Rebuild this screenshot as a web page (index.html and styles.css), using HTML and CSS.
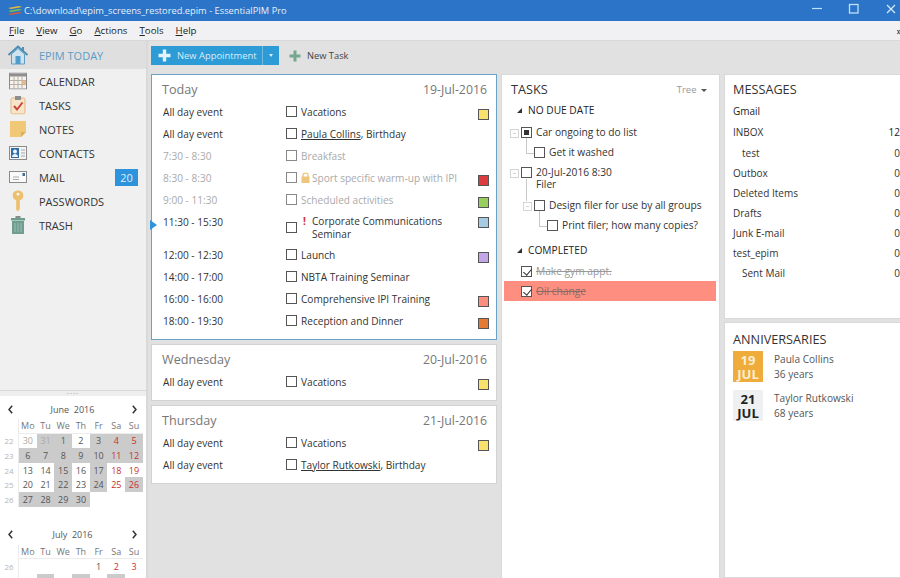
FILE: index.html
```html
<!DOCTYPE html>
<html lang="en">
<head>
    <meta charset="UTF-8">
    <title>EssentialPIM Pro</title>
    <link rel="stylesheet" href="styles.css">
</head>
<body>

    <header class="titlebar">
        <svg class="app-logo" width="16" height="12" viewBox="0 0 16 12">
            <path d="M1 3 L12 1 L15 2 L4 4 Z" fill="#e8b93a"/>
            <path d="M1 6 L12 4 L15 5 L4 7 Z" fill="#7cc24a"/>
            <path d="M1 9 L12 7 L15 8 L4 10 Z" fill="#d9583f"/>
        </svg>
        <span class="title-text">C:\download\epim_screens_restored.epim - EssentialPIM Pro</span>
        <div class="win-controls">
            <svg width="12" height="12" viewBox="0 0 12 12"><path d="M1 5.5 H11" stroke="#bfe0fa" stroke-width="1.2"/></svg>
            <svg width="12" height="12" viewBox="0 0 12 12"><rect x="1.5" y="1.5" width="8.5" height="8.5" fill="none" stroke="#bfe0fa" stroke-width="1.3"/></svg>
            <svg width="12" height="12" viewBox="0 0 12 12"><path d="M2 2 L10 10 M10 2 L2 10" stroke="#d6ebfb" stroke-width="1.2"/></svg>
        </div>
    </header>

    <nav class="menubar">
        <span class="menu-item"><u>F</u>ile</span>
        <span class="menu-item"><u>V</u>iew</span>
        <span class="menu-item"><u>G</u>o</span>
        <span class="menu-item"><u>A</u>ctions</span>
        <span class="menu-item"><u>T</u>ools</span>
        <span class="menu-item"><u>H</u>elp</span>
        <span class="menu-more">&raquo;</span>
    </nav>

    <div class="app">
        <aside class="sidebar">
            <ul class="nav-list">
                <li class="nav-item active">
                    <svg class="nav-icon" width="22" height="22" viewBox="0 0 22 22">
                        <path d="M1.5 11 L11 2.5 L20.5 11" fill="none" stroke="#4f8db5" stroke-width="2"/>
                        <path d="M4.5 10 V20 H17.5 V10 L11 4.5 Z" fill="#cfe3ef" stroke="#5f9dc4"/>
                        <rect x="8.5" y="12" width="5" height="8" fill="#4f9ccb"/>
                        <rect x="15" y="3" width="2" height="4" fill="#4f8db5"/>
                    </svg>
                    <span>EPIM TODAY</span>
                </li>
                <li class="nav-item">
                    <svg class="nav-icon" width="18" height="17" viewBox="0 0 18 17">
                        <rect x="0.5" y="0.5" width="17" height="16" fill="#f6f3ee" stroke="#8a8a8a"/>
                        <rect x="1" y="1" width="16" height="3" fill="#8f8f8f"/>
                        <path d="M1 8 H17 M1 12 H17 M5 4 V16 M9 4 V16 M13 4 V16" stroke="#b7b0a6"/>
                        <rect x="13" y="8" width="4" height="4" fill="#e6b98c"/>
                    </svg>
                    <span>CALENDAR</span>
                </li>
                <li class="nav-item">
                    <svg class="nav-icon" width="16" height="19" viewBox="0 0 16 19">
                        <rect x="1" y="2.5" width="14" height="16" rx="1.5" fill="#f8e4c8" stroke="#e5b47a"/>
                        <rect x="5" y="0.5" width="6" height="4" fill="#8e8e8e"/>
                        <path d="M4 10.5 L7 14 L12.5 7" fill="none" stroke="#c9453a" stroke-width="2"/>
                    </svg>
                    <span>TASKS</span>
                </li>
                <li class="nav-item">
                    <svg class="nav-icon" width="16" height="16" viewBox="0 0 16 16">
                        <path d="M0 0 H16 V11 L11 16 H0 Z" fill="#f1c976"/>
                        <path d="M16 11 H11 V16 Z" fill="#dcae58"/>
                    </svg>
                    <span>NOTES</span>
                </li>
                <li class="nav-item">
                    <svg class="nav-icon" width="18" height="14" viewBox="0 0 18 14">
                        <rect x="0.5" y="0.5" width="17" height="13" fill="#f4f4f4" stroke="#8a8a8a"/>
                        <rect x="2" y="2" width="8" height="10" fill="#2f6fa8"/>
                        <circle cx="6" cy="5.5" r="2" fill="#f2f6fa"/>
                        <path d="M3 11 C3 7 9 7 9 11 Z" fill="#f2f6fa"/>
                        <path d="M12 4 H16 M12 7 H16 M12 10 H16" stroke="#a5a5a5"/>
                    </svg>
                    <span>CONTACTS</span>
                </li>
                <li class="nav-item">
                    <svg class="nav-icon" width="18" height="12" viewBox="0 0 18 12">
                        <rect x="0.5" y="0.5" width="17" height="11" fill="#fafafa" stroke="#8a8a8a"/>
                        <rect x="13.5" y="2" width="2.5" height="3" fill="#3e6d96"/>
                        <path d="M4 6 H10 M4 8.5 H10" stroke="#a8a8a8"/>
                    </svg>
                    <span>MAIL</span>
                    <span class="nav-badge">20</span>
                </li>
                <li class="nav-item">
                    <svg class="nav-icon" width="11" height="23" viewBox="0 0 12 23">
                        <path d="M6 0 C9.5 0 12 2.5 12 5.5 C12 8 10.5 9.8 8 10.6 V20 L6 23 L4 21 V10.6 C1.5 9.8 0 8 0 5.5 C0 2.5 2.5 0 6 0 Z" fill="#eec06e"/>
                        <circle cx="6" cy="4" r="1.5" fill="#f7f7f7"/>
                    </svg>
                    <span>PASSWORDS</span>
                </li>
                <li class="nav-item">
                    <svg class="nav-icon" width="14" height="18" viewBox="0 0 14 18">
                        <rect x="0" y="2" width="14" height="2.5" fill="#6d9f8e"/>
                        <rect x="4.5" y="0" width="5" height="2" fill="#8a8a8a"/>
                        <path d="M1 5 H13 V18 H1 Z" fill="#6f9e90"/>
                        <path d="M4 7 V16 M7 7 V16 M10 7 V16" stroke="#9dbfb4"/>
                    </svg>
                    <span>TRASH</span>
                </li>
            </ul>

            <div class="sidebar-spacer"></div>
            <div class="splitter">....</div>

            <div class="calendars">
                <section class="month">
                    <div class="month-head">
                        <svg width="5" height="9" viewBox="0 0 5 9"><path d="M4.2 0.7 L1 4.5 L4.2 8.3" fill="none" stroke="#333" stroke-width="1.5"/></svg>
                        <span>June&nbsp; 2016</span>
                        <svg width="5" height="9" viewBox="0 0 5 9"><path d="M0.8 0.7 L4 4.5 L0.8 8.3" fill="none" stroke="#333" stroke-width="1.5"/></svg>
                    </div>
                    <div class="month-grid">
                        <span class="wk head"></span><span class="wd">Mo</span><span class="wd">Tu</span><span class="wd">We</span><span class="wd">Th</span><span class="wd">Fr</span><span class="wd">Sa</span><span class="wd">Su</span>
                        <span class="wk">22</span><span class="d other">30</span><span class="d busy other">31</span><span class="d busy">1</span><span class="d">2</span><span class="d busy">3</span><span class="d busy red">4</span><span class="d busy red">5</span>
                        <span class="wk">23</span><span class="d busy">6</span><span class="d busy">7</span><span class="d busy">8</span><span class="d busy">9</span><span class="d busy">10</span><span class="d busy red">11</span><span class="d busy red">12</span>
                        <span class="wk">24</span><span class="d">13</span><span class="d">14</span><span class="d busy">15</span><span class="d">16</span><span class="d busy">17</span><span class="d red">18</span><span class="d red">19</span>
                        <span class="wk">25</span><span class="d">20</span><span class="d">21</span><span class="d busy">22</span><span class="d">23</span><span class="d busy">24</span><span class="d red">25</span><span class="d busy red">26</span>
                        <span class="wk">26</span><span class="d busy">27</span><span class="d busy">28</span><span class="d busy">29</span><span class="d busy">30</span><span class="d"></span><span class="d"></span><span class="d"></span>
                    </div>
                </section>
                <section class="month">
                    <div class="month-head">
                        <svg width="5" height="9" viewBox="0 0 5 9"><path d="M4.2 0.7 L1 4.5 L4.2 8.3" fill="none" stroke="#333" stroke-width="1.5"/></svg>
                        <span>July&nbsp; 2016</span>
                        <svg width="5" height="9" viewBox="0 0 5 9"><path d="M0.8 0.7 L4 4.5 L0.8 8.3" fill="none" stroke="#333" stroke-width="1.5"/></svg>
                    </div>
                    <div class="month-grid">
                        <span class="wk head"></span><span class="wd">Mo</span><span class="wd">Tu</span><span class="wd">We</span><span class="wd">Th</span><span class="wd">Fr</span><span class="wd">Sa</span><span class="wd">Su</span>
                        <span class="wk">26</span><span class="d"></span><span class="d"></span><span class="d"></span><span class="d"></span><span class="d">1</span><span class="d red">2</span><span class="d red">3</span>
                        <span class="wk">27</span><span class="d">4</span><span class="d busy">5</span><span class="d">6</span><span class="d busy">7</span><span class="d">8</span><span class="d busy red">9</span><span class="d red">10</span>
                    </div>
                </section>
            </div>
        </aside>

        <div class="workspace">
            <div class="toolbar">
                <div class="split-button">
                    <span class="split-main">
                        <svg width="13" height="13" viewBox="0 0 13 13"><path d="M6.5 0.5 V12.5 M0.5 6.5 H12.5" stroke="#e3f3fc" stroke-width="3.4"/></svg>
                        New Appointment
                    </span>
                    <span class="split-drop"></span>
                </div>
                <span class="tool-button">
                    <svg width="12" height="12" viewBox="0 0 12 12"><path d="M6 0.5 V11.5 M0.5 6 H11.5" stroke="#77a88d" stroke-width="3"/></svg>
                    New Task
                </span>
            </div>

            <div class="columns">
                <div class="col-days">
                    <section class="day current">
                        <span class="day-marker"></span>
                        <h2 class="day-head"><span>Today</span><span>19-Jul-2016</span></h2>
                        <div class="ev"><span class="ev-time">All day event</span><span class="box"></span><span class="ev-text">Vacations</span><span class="tag yellow"></span></div>
                        <div class="ev"><span class="ev-time">All day event</span><span class="box"></span><span class="ev-text"><u>Paula Collins</u>, Birthday</span></div>
                        <div class="ev past"><span class="ev-time">7:30 - 8:30</span><span class="box"></span><span class="ev-text">Breakfast</span></div>
                        <div class="ev past"><span class="ev-time">8:30 - 8:30</span><span class="box"></span><span class="ev-text">
                            <svg class="lock" width="9" height="11" viewBox="0 0 9 11"><path d="M2 5 V3.2 C2 0.4 7 0.4 7 3.2 V5" fill="none" stroke="#eec57c" stroke-width="1.3"/><rect x="0.5" y="4.5" width="8" height="6.5" fill="#eec57c"/></svg>Sport specific warm-up with IPI</span><span class="tag red"></span></div>
                        <div class="ev past"><span class="ev-time">9:00 - 11:30</span><span class="box"></span><span class="ev-text">Scheduled activities</span><span class="tag green"></span></div>
                        <div class="ev tall"><span class="ev-time">11:30 - 15:30</span><span class="box"></span><span class="ev-text important"><b class="bang">!</b><span>Corporate Communications Seminar</span></span><span class="tag blue"></span></div>
                        <div class="ev"><span class="ev-time">12:00 - 12:30</span><span class="box"></span><span class="ev-text">Launch</span><span class="tag purple"></span></div>
                        <div class="ev"><span class="ev-time">14:00 - 17:00</span><span class="box"></span><span class="ev-text">NBTA Training Seminar</span></div>
                        <div class="ev"><span class="ev-time">16:00 - 16:00</span><span class="box"></span><span class="ev-text">Comprehensive IPI Training</span><span class="tag salmon"></span></div>
                        <div class="ev"><span class="ev-time">18:00 - 19:30</span><span class="box"></span><span class="ev-text">Reception and Dinner</span><span class="tag orange"></span></div>
                    </section>
                    <section class="day">
                        <h2 class="day-head"><span>Wednesday</span><span>20-Jul-2016</span></h2>
                        <div class="ev"><span class="ev-time">All day event</span><span class="box"></span><span class="ev-text">Vacations</span><span class="tag yellow"></span></div>
                    </section>
                    <section class="day">
                        <h2 class="day-head"><span>Thursday</span><span>21-Jul-2016</span></h2>
                        <div class="ev"><span class="ev-time">All day event</span><span class="box"></span><span class="ev-text">Vacations</span><span class="tag yellow"></span></div>
                        <div class="ev"><span class="ev-time">All day event</span><span class="box"></span><span class="ev-text"><u>Taylor Rutkowski</u>, Birthday</span></div>
                    </section>
                </div>

                <section class="tasks panel">
                    <div class="tasks-head"><h2 class="panel-title">TASKS</h2><span class="tree-mode">Tree <i class="caret"></i></span></div>
                    <div class="group"><i class="tri"></i>NO DUE DATE</div>
                    <div class="task lvl0 has-kids"><span class="box half"></span><span>Car ongoing to do list</span></div>
                    <div class="task lvl1 elbow"><span class="box"></span><span>Get it washed</span></div>
                    <div class="task lvl0 has-kids two"><span class="box"></span><span>20-Jul-2016 8:30<br>Filer</span></div>
                    <div class="task lvl1 has-kids"><span class="box"></span><span>Design filer for use by all groups</span></div>
                    <div class="task lvl2 elbow"><span class="box"></span><span>Print filer; how many copies?</span></div>
                    <div class="group second"><i class="tri"></i>COMPLETED</div>
                    <div class="task lvl0 done"><span class="box checked"></span><s>Make gym appt.</s></div>
                    <div class="task lvl0 done hot"><span class="box checked"></span><s>Oil change</s></div>
                </section>

                <div class="col-right">
                    <section class="messages panel">
                        <h2 class="panel-title">MESSAGES</h2>
                        <div class="account">Gmail</div>
                        <div class="folder"><span>INBOX</span><b>12</b></div>
                        <div class="folder sub"><span>test</span><span>0</span></div>
                        <div class="folder"><span>Outbox</span><span>0</span></div>
                        <div class="folder"><span>Deleted Items</span><span>0</span></div>
                        <div class="folder"><span>Drafts</span><span>0</span></div>
                        <div class="folder"><span>Junk E-mail</span><span>0</span></div>
                        <div class="folder"><span>test_epim</span><span>0</span></div>
                        <div class="folder sub"><span>Sent Mail</span><span>0</span></div>
                    </section>
                    <section class="anniv panel">
                        <h2 class="panel-title">ANNIVERSARIES</h2>
                        <div class="anniv-row">
                            <div class="date-tile today">19<br>JUL</div>
                            <div class="anniv-text">Paula Collins<br>36 years</div>
                        </div>
                        <div class="anniv-row">
                            <div class="date-tile">21<br>JUL</div>
                            <div class="anniv-text">Taylor Rutkowski<br>68 years</div>
                        </div>
                    </section>
                </div>
            </div>
        </div>
    </div>

</body>
</html>
```

FILE: styles.css
```css
* {
    box-sizing: border-box;
}

html, body {
    margin: 0;
    height: 578px;
    overflow: hidden;
}

body {
    display: flex;
    flex-direction: column;
    font-family: "Open Sans", "Noto Sans", sans-serif;
    font-size: 10.1px;
    color: #333;
    background: #e1e1e1;
}

h2, ul {
    margin: 0;
    padding: 0;
}

/* title bar */
.titlebar {
    flex: none;
    height: 21px;
    display: flex;
    align-items: center;
    padding-left: 7px;
    background: #2b74c7;
    color: #e6f0fa;
    font-size: 9.3px;
}

.app-logo {
    margin-right: 1px;
}

.title-text {
    flex: 1;
}

.win-controls {
    display: flex;
    gap: 25px;
    padding: 0 3px 4px 0;
}

/* menu */
.menubar {
    flex: none;
    height: 20px;
    display: flex;
    align-items: center;
    padding-left: 9px;
    background: #f1f1f3;
    border-bottom: 1px solid #d8d8d8;
    color: #222;
    font-size: 9.7px;
}

.menu-item {
    margin-right: 12px;
}

.menu-more {
    margin-left: auto;
    font-size: 11px;
    line-height: 1;
    margin-right: -2px;
}

.app {
    flex: 1;
    min-height: 0;
    display: flex;
}

/* sidebar */
.sidebar {
    flex: none;
    width: 148px;
    display: flex;
    flex-direction: column;
    background: #f0f0f0;
    border-right: 2px solid #d9d9d9;
}

.nav-list {
    list-style: none;
    padding-bottom: 2px;
}

.nav-item {
    position: relative;
    height: 24px;
    display: flex;
    align-items: center;
    padding-left: 39px;
    font-size: 11px;
    color: #333;
}

.nav-item.active {
    height: 28px;
    background: #dfdfdf;
    color: #5b9cc7;
}

.nav-icon {
    position: absolute;
    left: 18px;
    top: 50%;
    transform: translate(-50%, -50%);
}

.nav-badge {
    margin-left: auto;
    margin-right: 8px;
    width: 23px;
    height: 17px;
    line-height: 17px;
    text-align: center;
    background: #2d93dc;
    color: #dff0fb;
}

.sidebar-spacer {
    flex: 1;
}

.splitter {
    flex: none;
    height: 6px;
    line-height: 0;
    text-align: center;
    font-size: 8px;
    letter-spacing: 1px;
    color: #999;
    background: #eeeeee;
    border-top: 1px solid #d9d9d9;
}

.calendars {
    flex: none;
    height: 182px;
    overflow: hidden;
    padding-top: 5px;
    background: #fff;
    font-size: 9px;
    color: #555;
}

.month {
    margin-bottom: 20px;
}

.month-head {
    height: 16px;
    display: flex;
    align-items: center;
    justify-content: space-between;
    padding: 0 9px 0 8px;
    font-size: 9px;
}

.month-grid {
    display: grid;
    grid-template-columns: 19px repeat(7, 17.7px);
    grid-auto-rows: 14.6px;
    align-items: stretch;
    margin-top: 2px;
}

.month-grid > span {
    display: flex;
    align-items: center;
    justify-content: center;
}

.wk {
    font-size: 8px;
    color: #b5b5b5;
    border-right: 1px solid #ececec;
}

.wd {
    color: #777;
    border-bottom: 1px solid #ececec;
}

.d.busy {
    background: #cbcbcb;
}

.d.other {
    color: #aaa;
}

.d.red {
    color: #c9302c;
}

/* toolbar */
.workspace {
    flex: 1;
    min-width: 0;
    display: flex;
    flex-direction: column;
}

.toolbar {
    flex: none;
    height: 33px;
    display: flex;
    align-items: center;
    gap: 10px;
    padding: 0 0 4px 3px;
    background: #e1e1e1;
}

.split-button {
    display: flex;
    height: 19px;
    background: #2c9bd6;
    color: #d8eefa;
}

.split-main {
    width: 111px;
    display: flex;
    align-items: center;
    gap: 6px;
    padding-left: 7px;
    white-space: nowrap;
    font-size: 9.4px;
}

.split-drop {
    width: 17px;
    display: flex;
    align-items: center;
    justify-content: center;
    border-left: 1px solid #6fbbe3;
}

.split-drop::after {
    content: "";
    border: 2.5px solid transparent;
    border-top: 3px solid #d8eefa;
    border-bottom: 0;
}

.tool-button {
    display: flex;
    align-items: center;
    gap: 6px;
    font-size: 9.3px;
    color: #444;
}

/* columns */
.columns {
    flex: 1;
    min-height: 0;
    display: flex;
    gap: 4px;
    padding-left: 3px;
}

.col-days {
    flex: none;
    width: 346px;
    display: flex;
    flex-direction: column;
    gap: 4px;
}

.day {
    position: relative;
    padding: 7px 7px 7px 0;
    background: #fff;
    border: 1px solid #d2d2d2;
}

.day.current {
    border-color: #6ba3c7;
}

.day-marker {
    position: absolute;
    left: -2px;
    top: 145px;
    border: 5px solid transparent;
    border-left: 7px solid #2d93dc;
    border-right: 0;
}

.day-head {
    display: flex;
    justify-content: space-between;
    padding: 0 2px 0 10px;
    height: 19px;
    line-height: 16px;
    font-size: 12.6px;
    font-weight: 400;
    color: #777;
}

.day-head span:last-child {
    font-size: 12.3px;
}

.ev {
    display: flex;
    align-items: flex-start;
    height: 22px;
    padding-left: 11px;
    padding-top: 4px;
    line-height: 14px;
    color: #333;
}

.ev.tall {
    height: 33px;
}

.ev.past {
    color: #aaa;
}

.ev-time {
    flex: none;
    width: 123px;
}

.box {
    flex: none;
    position: relative;
    display: block;
    width: 11px;
    height: 11px;
    background: #fff;
    border: 1px solid #555;
}

.past .box {
    border-color: #888;
}

.ev .box {
    margin-top: 1px;
}

.ev.tall .box {
    margin-top: 7px;
}

.ev-text {
    flex: 1;
    min-width: 0;
    padding-left: 4px;
    white-space: nowrap;
}

.ev-text.important {
    display: flex;
    white-space: normal;
    line-height: 12.5px;
}

.bang {
    flex: none;
    width: 11px;
    padding-left: 2px;
    color: #d0302c;
}

.lock {
    margin-right: 2px;
    vertical-align: -1px;
}

.tag {
    flex: none;
    width: 11px;
    height: 11px;
    margin-top: 4px;
    border: 1px solid #555;
}

.tall .tag {
    margin-top: 2px;
}

.tag.yellow { background: #f8e26d; }
.tag.red { background: #dd3c3f; }
.tag.green { background: #97cf5e; }
.tag.blue { background: #a6cbe3; }
.tag.purple { background: #c3a6e8; }
.tag.salmon { background: #fb8e7e; }
.tag.orange { background: #e37b35; }

/* right panels */
.panel {
    background: #fff;
    border: 1px solid #d9d9d9;
}

.panel-title {
    font-size: 12.7px;
    font-weight: 400;
    color: #333;
    line-height: 18px;
}

.tasks {
    flex: none;
    width: 219px;
    height: 510px;
    padding: 4px 3px 0 2px;
    font-size: 10.2px;
}

.tasks-head {
    display: flex;
    justify-content: space-between;
    align-items: center;
    padding: 0 9px 0 7px;
    height: 20px;
}

.tree-mode {
    font-size: 9.5px;
    color: #999;
}

.caret {
    display: inline-block;
    margin-left: 2px;
    vertical-align: 1px;
    border: 3px solid transparent;
    border-top: 3px solid #555;
    border-bottom: 0;
}

.group {
    display: flex;
    align-items: center;
    height: 22px;
    margin-bottom: 1px;
    padding-left: 13px;
    color: #222;
}

.group.second {
    margin-top: 4px;
    margin-bottom: 0;
}

.tri {
    width: 0;
    height: 0;
    margin-right: 6px;
    border-left: 5px solid transparent;
    border-bottom: 5px solid #333;
}

.task {
    position: relative;
    display: flex;
    align-items: flex-start;
    gap: 4px;
    height: 20px;
    padding-top: 3px;
    line-height: 14px;
}

.task .box {
    margin-top: 2px;
    width: 11px;
    height: 11px;
}

.task.two {
    height: 33px;
    line-height: 12px;
    padding-top: 4px;
}

.task.two .box {
    margin-top: 1px;
}

.lvl0 { padding-left: 17px; }
.lvl1 { padding-left: 30px; }
.lvl2 { padding-left: 43px; }

/* tree minus sign */
.has-kids::before {
    content: "";
    position: absolute;
    top: 7px;
    margin-left: -11px;
    width: 7px;
    height: 7px;
    border: 1px solid #d5d5d5;
    background: linear-gradient(#d5d5d5, #d5d5d5) center / 3px 1px no-repeat;
}

.elbow::before {
    content: "";
    position: absolute;
    top: -4px;
    margin-left: -8px;
    width: 8px;
    height: 15px;
    border-left: 1px solid #c8c8c8;
    border-bottom: 1px solid #c8c8c8;
}

/* line from the dated task down to its child */
.two::after {
    content: "";
    position: absolute;
    top: 17px;
    margin-left: 5px;
    height: 22px;
    border-left: 1px solid #c8c8c8;
}

.box.half::after {
    content: "";
    position: absolute;
    inset: 2px;
    background: #333;
}

.box.checked::after {
    content: "";
    position: absolute;
    left: 3px;
    top: 0;
    width: 4px;
    height: 7px;
    border-right: 1.5px solid #333;
    border-bottom: 1.5px solid #333;
    transform: rotate(40deg);
}

.done s {
    color: #999;
}

.hot {
    background: #fd8e80;
}

.hot s {
    color: #8a6a64;
}

.col-right {
    flex: 1;
    min-width: 0;
    display: flex;
    flex-direction: column;
    gap: 3px;
}

.messages {
    flex: none;
    height: 245px;
    padding: 5px 0 0 8px;
    border-right: 0;
    font-size: 10px;
}

.account {
    height: 22px;
    line-height: 22px;
    margin-top: 2px;
    color: #222;
}

.folder {
    display: flex;
    justify-content: space-between;
    height: 20px;
    line-height: 20px;
}

.account + .folder {
    height: 21px;
}

.folder.sub {
    padding-left: 9px;
}

.folder b {
    font-weight: 400;
    color: #222;
}

.anniv {
    flex: 1;
    padding: 7px 0 0 8px;
    border-right: 0;
}

.anniv-row {
    display: flex;
    gap: 11px;
    margin-top: 3px;
    height: 31px;
}

.anniv-row + .anniv-row {
    margin-top: 8px;
}

.date-tile {
    flex: none;
    width: 30px;
    height: 31px;
    padding-top: 2px;
    text-align: center;
    font-size: 13px;
    font-weight: 700;
    line-height: 14px;
    background: #eff0f1;
    color: #222;
}

.date-tile.today {
    background: #efac3a;
    color: #fbeed2;
}

.anniv-text {
    padding-top: 1px;
    line-height: 15px;
    color: #555;
}
```
